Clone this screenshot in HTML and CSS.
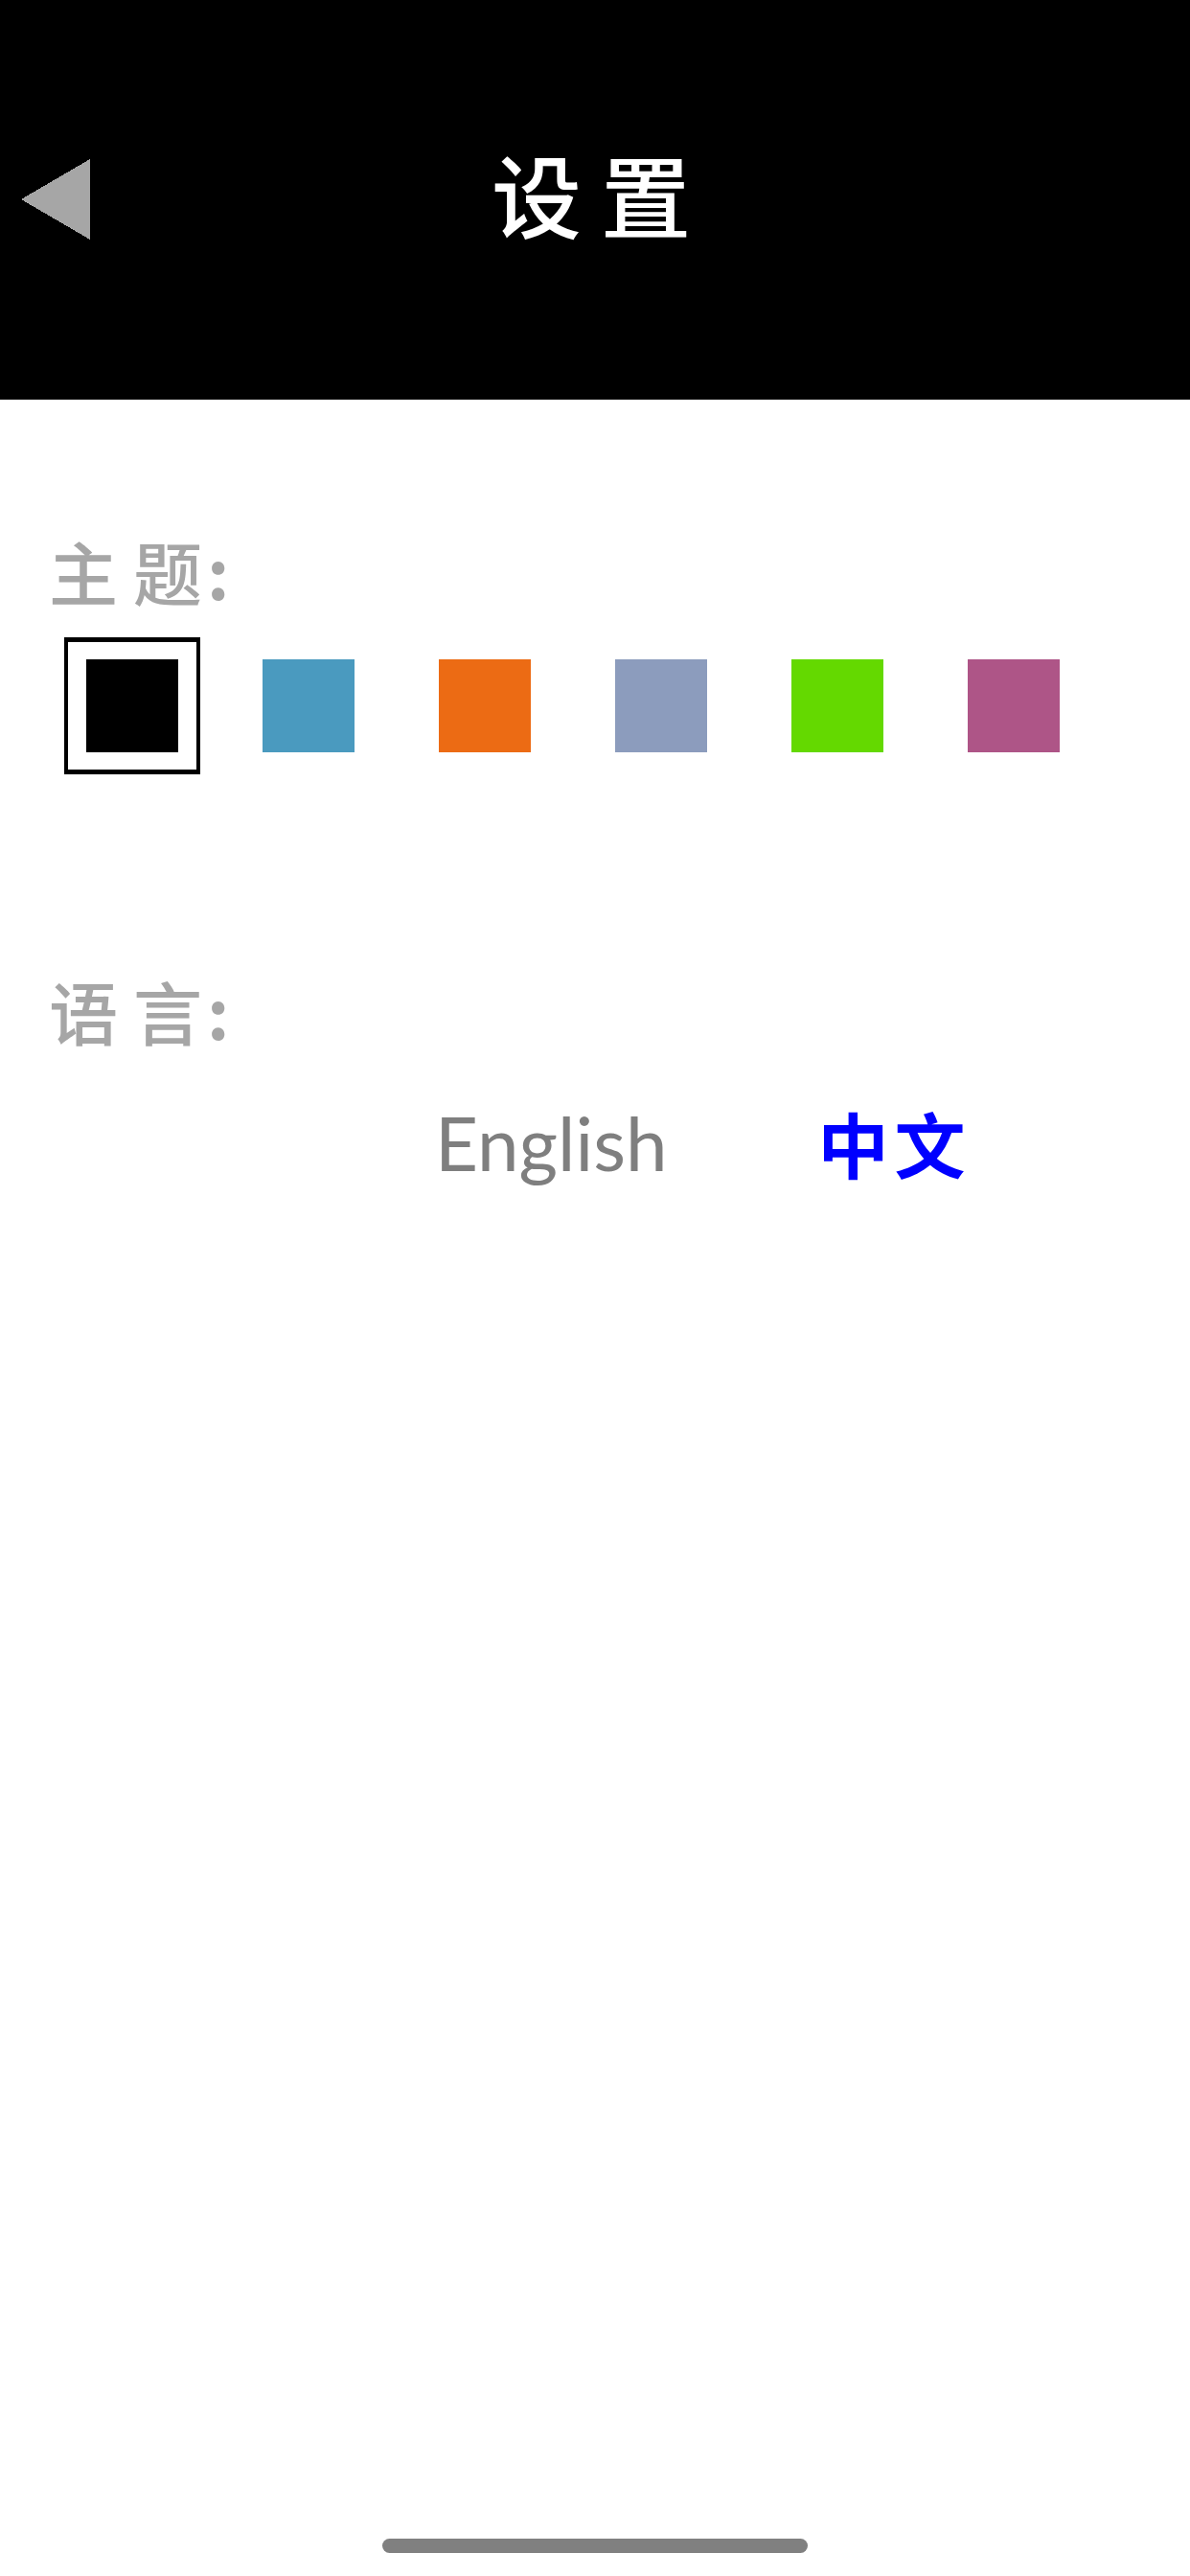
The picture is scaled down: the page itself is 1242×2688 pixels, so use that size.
FILE: index.html
```html
<!DOCTYPE html>
<html lang="zh-CN">
<head>
<meta charset="utf-8">
<title>设置</title>
<link rel="stylesheet" href="styles.css">
</head>
<body>
<div class="page">
  <header class="header">
    <svg class="back" width="72" height="84" viewBox="0 0 72 84"><polygon points="72,0 72,84 0,42" fill="#a6a6a6" shape-rendering="crispEdges"/></svg>
    <h1 class="title">设置</h1>
  </header>
  <main class="content">
    <section class="theme">
      <h2 class="label"><span class="spaced">主</span>题<span class="colon">:</span></h2>
      <div class="swatches">
        <div class="cell selected"><div class="swatch black"></div></div>
        <div class="cell"><div class="swatch blue"></div></div>
        <div class="cell"><div class="swatch orange"></div></div>
        <div class="cell"><div class="swatch slate"></div></div>
        <div class="cell"><div class="swatch green"></div></div>
        <div class="cell"><div class="swatch magenta"></div></div>
      </div>
    </section>
    <section class="language">
      <h2 class="label"><span class="spaced">语</span>言<span class="colon">:</span></h2>
      <div class="langs">
        <span class="lang-en">English</span>
        <span class="lang-zh">中文</span>
      </div>
    </section>
  </main>
  <div class="home-bar"></div>
</div>
</body>
</html>
```
FILE: styles.css
```css
* { box-sizing: border-box; }
html, body { margin: 0; padding: 0; background: #fff; }
body { font-family: "Noto Sans CJK SC", "Noto Sans", sans-serif; }
.page { width: 1242px; height: 2688px; display: flex; flex-direction: column; overflow: hidden; }
.header { height: 417px; background: #000; display: flex; align-items: flex-start; padding: 166px 0 0 22px; }
.back { display: block; flex: none; }
.title { margin: -25px 0 0 419px; font-size: 94px; line-height: 120px; font-weight: 500; letter-spacing: 20px; color: #fff; white-space: nowrap; }
.content { flex: 1; padding: 0 0 0 51px; }
.theme { padding-top: 130px; }
.label { margin: 0; font-size: 72px; line-height: 96px; height: 96px; font-weight: 500; color: #a6a6a6; white-space: nowrap; }
.spaced { letter-spacing: 16px; }
.colon { margin-left: 5px; font-weight: 700; }
.swatches { display: flex; gap: 42px; margin: 22px 0 0 16px; }
.cell { width: 142px; height: 143px; border-style: solid; border-color: transparent; border-width: 5px 4px; display: flex; align-items: center; justify-content: center; flex: none; }
.cell.selected { border-color: #000; }
.swatch { width: 96px; height: 97px; }
.black { background: #000; }
.blue { background: #4a9abf; }
.orange { background: #ec6b14; }
.slate { background: #8c9cbd; }
.green { background: #64d900; }
.magenta { background: #ae5587; }
.language { padding-top: 198px; }
.langs { display: flex; align-items: center; margin: 42px 0 0 403px; height: 96px; }
.lang-en { font-family: "Lato", sans-serif; font-size: 78px; line-height: 96px; color: #7f7f7f; }
.lang-zh { margin-left: 157px; font-size: 74px; line-height: 96px; font-weight: 700; letter-spacing: 6px; color: #00f; white-space: nowrap; }
.home-bar { flex: none; width: 444px; height: 15px; margin: 0 0 24px 399px; background: #808080; border-radius: 8px; }
```
